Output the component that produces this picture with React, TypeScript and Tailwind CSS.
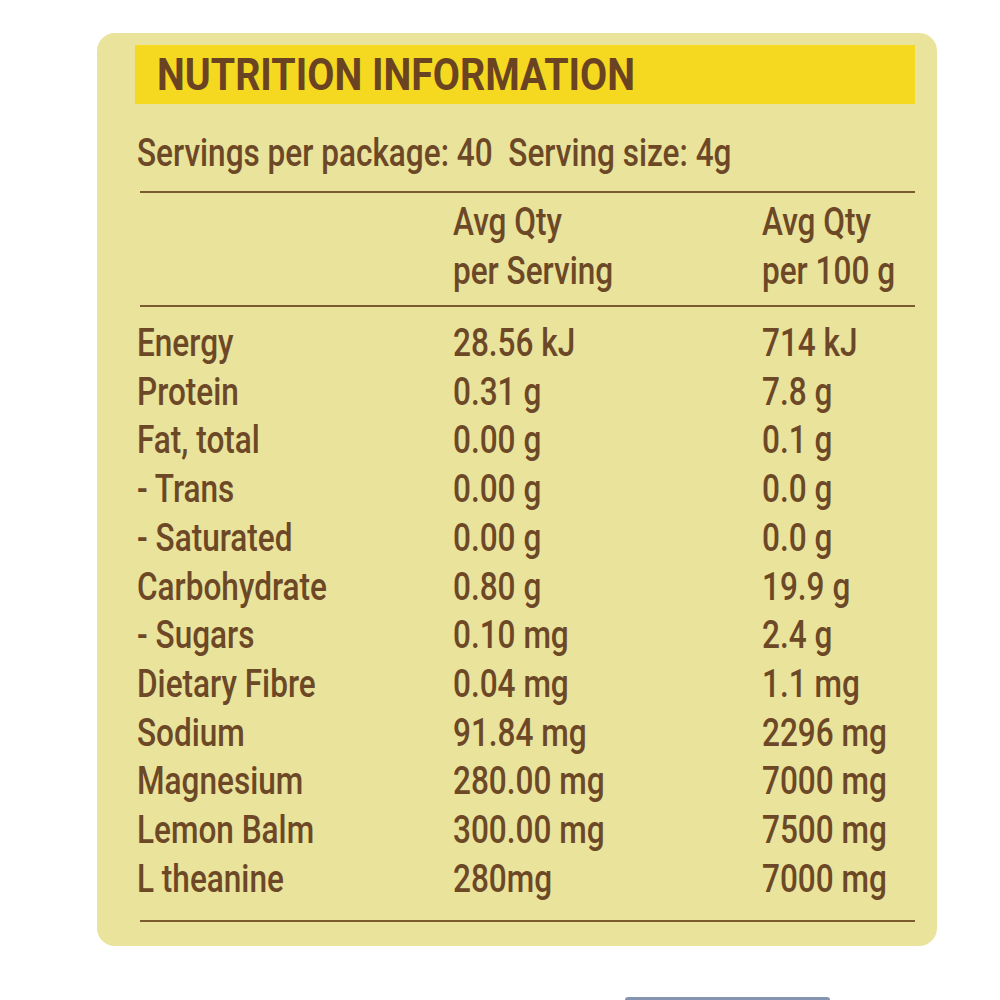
const rows: [string, string, string][] = [
  ["Energy", "28.56 kJ", "714 kJ"],
  ["Protein", "0.31 g", "7.8 g"],
  ["Fat, total", "0.00 g", "0.1 g"],
  ["- Trans", "0.00 g", "0.0 g"],
  ["- Saturated", "0.00 g", "0.0 g"],
  ["Carbohydrate", "0.80 g", "19.9 g"],
  ["- Sugars", "0.10 mg", "2.4 g"],
  ["Dietary Fibre", "0.04 mg", "1.1 mg"],
  ["Sodium", "91.84 mg", "2296 mg"],
  ["Magnesium", "280.00 mg", "7000 mg"],
  ["Lemon Balm", "300.00 mg", "7500 mg"],
  ["L theanine", "280mg", "7000 mg"],
];

// condensed look: Roboto squeezed horizontally
function Narrow({ children }: { children: React.ReactNode }) {
  return (
    <span className="inline-block whitespace-nowrap origin-left scale-x-[0.83]">
      {children}
    </span>
  );
}

export default function App() {
  return (
    <div
      className="w-[1000px] h-[1000px] bg-white overflow-hidden text-[#6c4827]"
      style={{ fontFamily: 'Roboto, "Liberation Sans", sans-serif' }}
    >
      <div className="ml-[97px] mt-[33px] w-[840px] h-[913px] rounded-[18px] bg-[#e9e39c] pt-[12px] pl-[38px] pr-[22px]">
        <div className="h-[59px] bg-[#f5d920] pl-[22px] flex items-center">
          <h1 className="text-[45px] font-bold leading-none text-[#6a4322] whitespace-nowrap origin-left scale-x-[0.875]">
            NUTRITION INFORMATION
          </h1>
        </div>

        <div className="pl-[2px] pt-[30px] h-[87px] text-[38px] font-medium leading-none">
          <Narrow>Servings per package: 40&nbsp;&nbsp;Serving size: 4g</Narrow>
        </div>

        <div className="ml-[5px] h-[2px] bg-[#7b5c2e]" />

        <div className="grid grid-cols-[316px_309px_1fr] pl-[2px] pt-[5px] h-[112px] text-[38px] font-medium leading-[49px]">
          <div />
          <div>
            <Narrow>Avg Qty</Narrow>
            <br />
            <Narrow>per Serving</Narrow>
          </div>
          <div>
            <Narrow>Avg Qty</Narrow>
            <br />
            <Narrow>per 100 g</Narrow>
          </div>
        </div>

        <div className="ml-[5px] h-[2px] bg-[#7b5c2e]" />

        <div className="pl-[2px] pt-[12px] h-[613px] text-[38px] font-medium leading-[48.7px]">
          {rows.map(([label, serving, per100]) => (
            <div key={label} className="grid grid-cols-[316px_309px_1fr]">
              <div>
                <Narrow>{label}</Narrow>
              </div>
              <div>
                <Narrow>{serving}</Narrow>
              </div>
              <div>
                <Narrow>{per100}</Narrow>
              </div>
            </div>
          ))}
        </div>

        <div className="ml-[5px] h-[2px] bg-[#7b5c2e]" />
      </div>

      <div className="ml-[625px] mt-[51px] w-[205px] h-[6px] rounded-t-[3px] bg-[#8595b0]" />
    </div>
  );
}
